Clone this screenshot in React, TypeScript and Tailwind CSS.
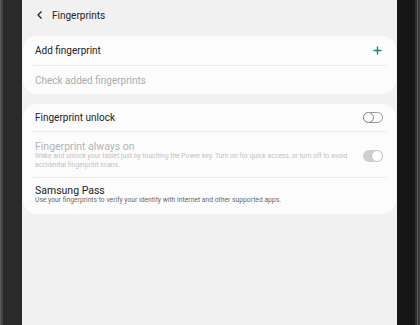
import React from "react";

const Toggle = ({ on }: { on?: boolean }) => {
  if (on) {
    return (
      <div className="relative w-[20px] h-[12px] rounded-full bg-[#cfcfcf] shrink-0">
        <div className="absolute right-0 top-0 w-[12px] h-[12px] rounded-full bg-white border border-[#c4c4c4]" />
      </div>
    );
  }
  return (
    <div className="relative w-[20px] h-[11px] rounded-full border border-[#9a9a9a] shrink-0">
      <div className="absolute -left-px -top-px w-[11px] h-[11px] rounded-full bg-[#fcfcfc] border border-[#8a8a8a]" />
    </div>
  );
};

const Divider = () => <div className="h-px bg-[#ececec] ml-[10px] mr-[9px]" />;

export default function App() {
  return (
    <div className="w-[420px] h-[325px] flex overflow-hidden font-['Roboto',sans-serif]">
      {/* left bezel */}
      <div className="flex w-[22px] h-full">
        <div className="w-px bg-[#5a5a5a]" />
        <div className="w-[2px] bg-[#444]" />
        <div className="flex-1 bg-[#2a2a2a]" />
      </div>

      {/* screen */}
      <div className="w-[375px] h-full bg-[#f1f1f1] flex flex-col px-px">
        <div className="h-[36px] flex items-center pl-[13px] pb-[6px]">
          <svg width="8" height="10" viewBox="0 0 8 10" className="shrink-0">
            <path d="M5.5 1.5 L2 5 L5.5 8.5" fill="none" stroke="#222" strokeWidth="1.3" />
          </svg>
          <span className="ml-[8px] text-[10px] text-[#222]">Fingerprints</span>
        </div>

        <div className="rounded-[14px] bg-[#fcfcfc]">
          <div className="h-[29px] flex items-center justify-between pl-[12px] pr-[14px]">
            <span className="text-[10px] text-[#222]">Add fingerprint</span>
            <svg width="9" height="9" viewBox="0 0 9 9">
              <path d="M4.5 0.5 V8.5 M0.5 4.5 H8.5" stroke="#1b8579" strokeWidth="1.4" />
            </svg>
          </div>
          <Divider />
          <div className="h-[28px] flex items-center pl-[12px]">
            <span className="text-[10px] text-[#ababab]">Check added fingerprints</span>
          </div>
        </div>

        <div className="mt-[10px] rounded-[14px] bg-[#fcfcfc]">
          <div className="h-[27px] flex items-center justify-between pl-[12px] pr-[13px]">
            <span className="text-[10px] text-[#222]">Fingerprint unlock</span>
            <Toggle />
          </div>
          <Divider />
          <div className="h-[45px] flex items-center justify-between pl-[12px] pr-[13px] pt-[2px]">
            <div className="flex flex-col">
              <span className="text-[10.5px] leading-[11px] text-[#b4b4b4]">Fingerprint always on</span>
              <span className="text-[6.75px] leading-[9px] text-[#c2c2c2] w-[318px]">
                Wake and unlock your tablet just by touching the Power key. Turn on for quick access, or turn off to avoid accidental fingerprint scans.
              </span>
            </div>
            <Toggle on />
          </div>
          <Divider />
          <div className="h-[36px] flex flex-col justify-center pl-[12px] pb-[2px]">
            <span className="text-[10.5px] leading-[11px] text-[#222]">Samsung Pass</span>
            <span className="text-[6.75px] leading-[9px] text-[#6a6a6a]">
              Use your fingerprints to verify your identity with Internet and other supported apps.
            </span>
          </div>
        </div>
      </div>

      {/* right bezel */}
      <div className="flex flex-1 h-full">
        <div className="flex-1 bg-[#161616]" />
        <div className="w-[2px] bg-[#2e2e2e]" />
        <div className="w-[1px] bg-[#555]" />
        <div className="w-[2px] bg-[#3a3a3a]" />
      </div>
    </div>
  );
}
